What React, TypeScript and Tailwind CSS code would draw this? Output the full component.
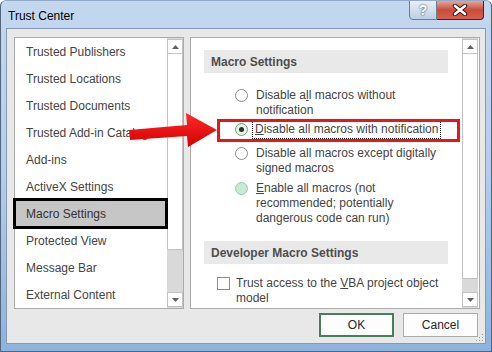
const listItems = [
  'Trusted Publishers',
  'Trusted Locations',
  'Trusted Documents',
  'Trusted Add-in Catalogs',
  'Add-ins',
  'ActiveX Settings',
  'Macro Settings',
  'Protected View',
  'Message Bar',
  'External Content',
];

function Arrow({ up }: { up?: boolean }) {
  return (
    <svg width="7" height="4" viewBox="0 0 7 4">
      {up ? <path d="M0 4 L3.5 0 L7 4 Z" fill="#606060" /> : <path d="M0 0 L7 0 L3.5 4 Z" fill="#606060" />}
    </svg>
  );
}

function ScrollBar({ thumb }: { thumb: number }) {
  return (
    <div className="w-[16px] flex flex-col bg-[#d9d9d9] py-px">
      <div className="h-[15px] bg-white border border-[#c2c2c2] flex items-center justify-center">
        <Arrow up />
      </div>
      <div className="bg-white border-x border-b border-[#c2c2c2]" style={{ height: thumb }} />
      <div className="flex-1" />
      <div className="h-[15px] bg-white border border-[#c2c2c2] flex items-center justify-center">
        <Arrow />
      </div>
    </div>
  );
}

function Radio({ state }: { state: 'off' | 'on' | 'hover' }) {
  if (state === 'on') {
    return (
      <div className="w-[13px] h-[13px] mt-[1px] shrink-0 rounded-full border border-[#6aa47d] bg-[#e4f2e8] flex items-center justify-center">
        <div className="w-[5px] h-[5px] rounded-full bg-[#2f2f2f]" />
      </div>
    );
  }
  return (
    <div
      className={
        state === 'hover'
          ? 'w-[13px] h-[13px] mt-[1px] shrink-0 rounded-full border border-[#98cdab] bg-[#c8e9d4]'
          : 'w-[13px] h-[13px] mt-[1px] shrink-0 rounded-full border border-[#8c8c8c] bg-white'
      }
    />
  );
}

export default function App() {
  return (
    <div className="relative w-[492px] h-[352px] overflow-hidden rounded-t-[6px] border border-[#52657d] border-t-[#93abc8] bg-gradient-to-b from-[#c3d8ef] via-[#b3cdea] to-[#8db3dc] font-['Liberation_Sans',Arial,sans-serif] text-[12px] text-[#444]">
      {/* Title bar */}
      <div className="h-[27px] flex items-start justify-between">
        <div className="pl-[7px] pt-[8px] leading-[14px] text-black">Trust Center</div>
        <div className="flex mr-[7px] -mt-px">
          <div className="w-[28px] h-[20px] rounded-bl-[4px] border border-[#6c7e96] bg-gradient-to-b from-[#e8eff7] to-[#bccfe4] flex items-center justify-center text-[14px] font-bold text-white [text-shadow:0_0_2px_#1d2a3a]">
            ?
          </div>
          <div className="w-[47px] h-[20px] rounded-br-[4px] border border-l-0 border-[#4d1f1a] bg-gradient-to-b from-[#e6a596] via-[#c84a3c] to-[#d9604f] flex items-center justify-center">
            <svg width="16" height="12" viewBox="0 0 16 12">
              <path d="M3 2 L13 10 M13 2 L3 10" stroke="#3a1712" strokeWidth="4.5" strokeLinecap="round" />
              <path d="M3 2 L13 10 M13 2 L3 10" stroke="#ffffff" strokeWidth="2.6" strokeLinecap="round" />
            </svg>
          </div>
        </div>
      </div>

      {/* Client area */}
      <div className="relative ml-[5px] w-[480px] h-[316px] border border-[#8599b2] bg-[#e8e8e8] pl-[7px] pr-[5px] pt-[8px]">
        <div className="flex gap-[6px] h-[272px]">
          {/* Category list */}
          <div className="w-[170px] border border-[#ababab] bg-white flex">
            <div className="flex-1 flex flex-col">
              {listItems.map((item) => (
                <div
                  key={item}
                  className={
                    item === 'Macro Settings'
                      ? 'relative h-[27px] shrink-0 flex items-center pl-[11px] bg-[#c6c6c6] text-[#333]'
                      : 'h-[27px] shrink-0 flex items-center pl-[11px] whitespace-nowrap'
                  }
                >
                  {item}
                  {item === 'Macro Settings' && (
                    <div className="absolute -top-[2px] -bottom-[2px] -left-[2px] -right-px border-[3px] border-black" />
                  )}
                </div>
              ))}
            </div>
            <ScrollBar thumb={196} />
          </div>

          {/* Settings panel */}
          <div className="w-[290px] border border-[#ababab] bg-white flex">
            <div className="flex-1 pl-[13px] pr-[14px] pt-[12px] text-[#444]">
              <div className="h-[23px] bg-[#e9e9e9] px-[7px] flex items-center font-bold text-[#4e4e4e]">Macro Settings</div>

              <div className="pl-[31px] leading-[15px]">
                <div className="flex gap-[8px] mt-[15px]">
                  <Radio state="off" />
                  <div>
                    Disable a<span className="underline">l</span>l macros without
                    <br />
                    notification
                  </div>
                </div>
                <div className="flex gap-[8px] mt-[4px]">
                  <Radio state="on" />
                  <div className="-ml-[2px] px-[1px] outline-1 outline-dotted outline-black outline-offset-[1px] whitespace-nowrap">
                    <span className="underline">D</span>isable all macros with notification
                  </div>
                </div>
                <div className="flex gap-[8px] mt-[9px]">
                  <Radio state="off" />
                  <div>
                    Disable all macros except di<span className="underline">g</span>itally
                    <br />
                    signed macros
                  </div>
                </div>
                <div className="flex gap-[8px] mt-[5px]">
                  <Radio state="hover" />
                  <div>
                    <span className="underline">E</span>nable all macros (not
                    <br />
                    recommended; potentially
                    <br />
                    dangerous code can run)
                  </div>
                </div>
              </div>

              <div className="mt-[15px] h-[23px] bg-[#e9e9e9] px-[7px] flex items-center font-bold text-[#4e4e4e]">
                Developer Macro Settings
              </div>

              <div className="flex gap-[6px] pl-[13px] mt-[12px] leading-[15px]">
                <div className="w-[13px] h-[13px] mt-[1px] shrink-0 border border-[#8c8c8c] bg-white" />
                <div>
                  Trust access to the <span className="underline">V</span>BA project object
                  <br />
                  model
                </div>
              </div>
            </div>
            <div className="mr-[1px] flex">
              <ScrollBar thumb={225} />
            </div>
          </div>
        </div>

        {/* Buttons */}
        <div className="flex justify-end gap-[9px] pr-[2px] mt-[4px]">
          <button className="w-[75px] h-[24px] border-2 border-[#4a7d5c] bg-[#fdfdfd] text-[#262626]">OK</button>
          <button className="w-[75px] h-[24px] border border-[#acacac] bg-[#fdfdfd] text-[#262626]">Cancel</button>
        </div>

        {/* Size grip */}
        <svg className="absolute right-[1px] bottom-[1px]" width="8" height="8" viewBox="0 0 8 8">
          <rect x="6" y="0" width="1" height="1" fill="#9a9a9a" />
          <rect x="3" y="3" width="1" height="1" fill="#9a9a9a" />
          <rect x="6" y="3" width="1" height="1" fill="#9a9a9a" />
          <rect x="0" y="6" width="1" height="1" fill="#9a9a9a" />
          <rect x="3" y="6" width="1" height="1" fill="#9a9a9a" />
          <rect x="6" y="6" width="1" height="1" fill="#9a9a9a" />
        </svg>
      </div>

      {/* Annotation: red highlight box */}
      <div className="absolute left-[216px] top-[118px] w-[243px] h-[23px] border-[3px] border-[#e8151b]" />

      {/* Annotation: red arrow */}
      <svg className="absolute left-0 top-0" width="492" height="352" viewBox="0 0 492 352">
        <defs>
          <linearGradient id="arrowFill" x1="0" y1="0" x2="0" y2="1">
            <stop offset="0" stopColor="#ff2a2a" />
            <stop offset="1" stopColor="#d40000" />
          </linearGradient>
        </defs>
        <polygon
          points="128,129 186,124 185,112 216,129 187,146 186,135 129,139"
          fill="url(#arrowFill)"
        />
      </svg>
    </div>
  );
}
